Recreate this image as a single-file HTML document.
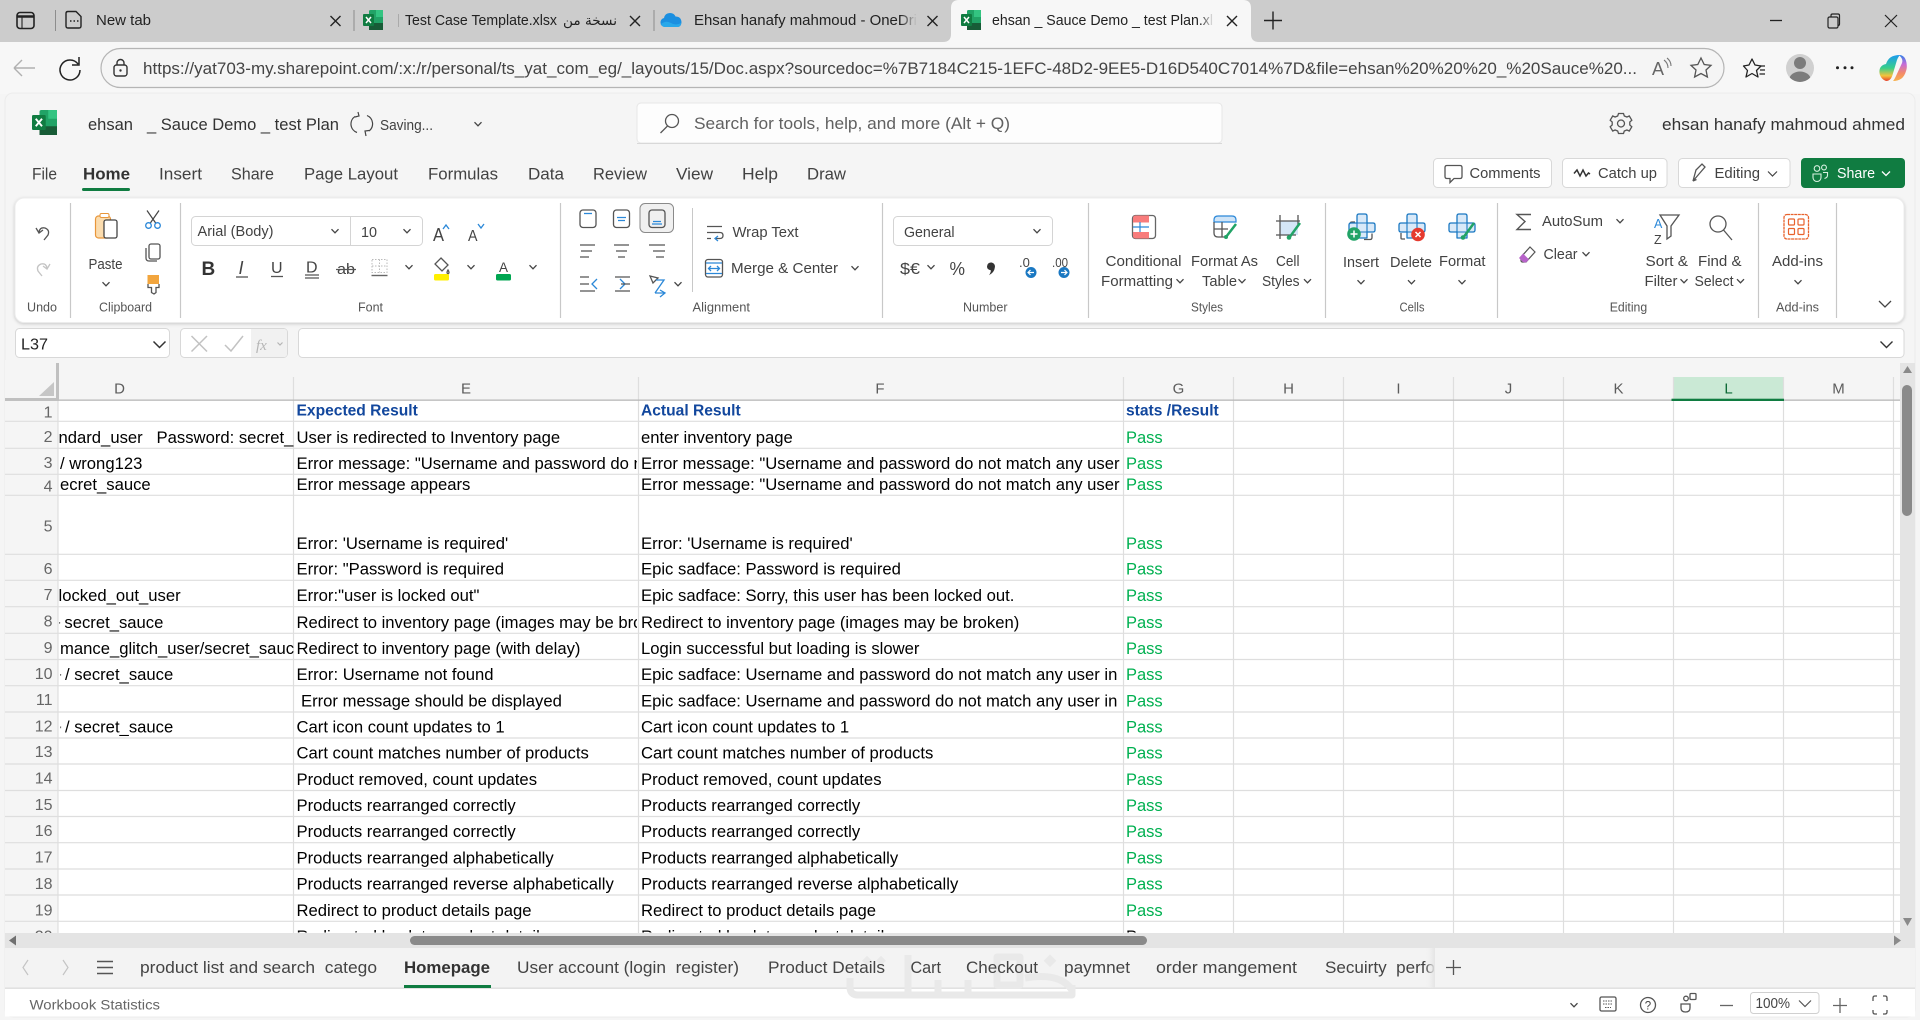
<!DOCTYPE html>
<html lang="en"><head><meta charset="utf-8"><title>ehsan _ Sauce Demo _ test Plan.xlsx</title>
<style>
html,body{margin:0;padding:0;width:1920px;height:1020px;overflow:hidden;background:#f5f5f5}
svg{display:block}
text{font-family:"Liberation Sans",sans-serif;fill:#424242;font-size:14.5px}
.t{font-size:14.5px;fill:#222}
.u{font-size:16.5px;fill:#444}
.r{font-size:14.5px;fill:#424242}
.g{font-size:13px;fill:#555}
.m{font-size:16.5px;fill:#424242}
.c{font-size:16.65px;fill:#000}
.h{font-size:15.6px;font-weight:bold;fill:#12479d}
.p{font-size:16.5px;fill:#00b050}
.ch{font-size:15px;fill:#5c5c5c;text-anchor:middle}
.rh{font-size:16px;fill:#666;text-anchor:end}
.s{font-size:16.5px;fill:#444}
.i{fill:none;stroke:#555;stroke-width:1.3}
.b{fill:none;stroke:#2b88d8;stroke-width:1.3}
</style></head><body>
<svg width="1920" height="1020" viewBox="0 0 1920 1020" xmlns="http://www.w3.org/2000/svg">
<defs>
<path id="v" d="M-3.5-1.8 0 1.8 3.5-1.8" fill="none" stroke="#444" stroke-width="1.3"/>
<path id="x" d="M-5-5 5 5M5-5-5 5" fill="none" stroke="#222" stroke-width="1.4"/>
<g id="xl"><rect x="6" y="0" width="14" height="20" rx="1.5" fill="#21a366"/><rect x="13" y="0" width="7" height="7" fill="#33c481"/><rect x="6" y="13" width="14" height="7" fill="#185c37"/><rect x="0" y="4" width="11" height="12" rx="1" fill="#107c41"/><path d="M3 7l5 6M8 7l-5 6" stroke="#fff" stroke-width="1.5"/></g>
<g id="plus"><path d="M0 9V2q0-2 2-2h6q2 0 2 2v7h6q2 0 2 2v5q0 2-2 2h-6v6H0v-6h-6q-2 0-2-2v-5q0-2 2-2Z" fill="#d9e9f8" stroke="#1a78c2" stroke-width="1.3" stroke-linejoin="round"/><path d="M0 9h10v9H0Z" fill="none" stroke="#1a78c2" stroke-width="1.1"/></g>
<clipPath id="cd"><rect x="58.5" y="400" width="235" height="533"/></clipPath>
<clipPath id="ce"><rect x="294" y="400" width="343" height="533"/></clipPath>
<clipPath id="cf"><rect x="639" y="400" width="483" height="533"/></clipPath>
<clipPath id="cg"><rect x="1124" y="400" width="109" height="533"/></clipPath>
<clipPath id="crow"><rect x="5" y="400" width="53" height="533"/></clipPath>
<clipPath id="ctab"><rect x="1300" y="948" width="134" height="40"/></clipPath>
<clipPath id="av"><circle cx="1800" cy="68" r="14"/></clipPath>
<linearGradient id="cp1" x1="0" y1="0" x2="0" y2="1"><stop offset="0" stop-color="#1d9bf0"/><stop offset=".5" stop-color="#38cf8a"/><stop offset=".8" stop-color="#f5c33b"/><stop offset="1" stop-color="#e5402c"/></linearGradient>
<linearGradient id="cp2" x1="0" y1="0" x2="0" y2="1"><stop offset="0" stop-color="#2f7fe8"/><stop offset=".35" stop-color="#c56cd8"/><stop offset=".7" stop-color="#f48a6a"/><stop offset="1" stop-color="#f7b24a"/></linearGradient>
<linearGradient id="fade" x1="0" x2="1"><stop offset="0" stop-color="#f3f3f3" stop-opacity="0"/><stop offset="1" stop-color="#e4e4e4"/></linearGradient>
<linearGradient id="f1" x1="0" x2="1"><stop offset="0" stop-color="#ccc" stop-opacity="0"/><stop offset="1" stop-color="#ccc"/></linearGradient>
<linearGradient id="f2" x1="0" x2="1"><stop offset="0" stop-color="#f7f7f7" stop-opacity="0"/><stop offset="1" stop-color="#f7f7f7"/></linearGradient>
</defs>

<!-- browser chrome -->
<rect width="1920" height="42" fill="#cccccc"/>
<rect y="42" width="1920" height="52" fill="#f7f7f7"/>
<path d="M943 42q8 0 8-8V8q0-8 8-8H1243q8 0 8 8V34q0 8 8 8Z" fill="#f7f7f7"/>
<rect x="17" y="12.5" width="17" height="16" rx="3" fill="none" stroke="#222" stroke-width="1.6"/><path d="M17 16.5h17" stroke="#222" stroke-width="2.6"/><path d="M22 17v11" stroke="#222" stroke-width="1.1"/>
<path d="M55.5 10V31M354 10V31M654 10V31" stroke="#8d8d8d" stroke-width="1"/>
<path d="M68 11.5h8l5 5V26q0 2-2 2H68q-2 0-2-2V13.5q0-2 2-2Z" fill="none" stroke="#222" stroke-width="1.4"/><path d="M70 21h1.5M73.5 21h1.5M77 21h1.5" stroke="#222" stroke-width="1.5"/>
<text class="t" x="96" y="25" textLength="55" lengthAdjust="spacingAndGlyphs">New tab</text>
<use href="#x" x="335.5" y="21"/>
<use href="#xl" x="363" y="10"/>
<rect x="398" y="14" width="1" height="13" fill="#aaa"/>
<text class="t" x="405" y="25" textLength="152" lengthAdjust="spacingAndGlyphs">Test Case Template.xlsx</text>
<text x="563" y="25" textLength="54" lengthAdjust="spacingAndGlyphs" style="font-family:'DejaVu Sans',sans-serif;fill:#222;font-size:13.5px" direction="rtl" text-anchor="start" dx="54">نسخة من</text>
<use href="#x" x="635" y="21"/>
<path d="M665 27q-4.5-.5-4.5-4.5 0-3.5 3.5-4.5 1-5 6-5 4 0 5.5 3.5 5.5 0 6 5.500 0 5-4.5 5Z" fill="#1b8fe0"/><path d="M661 24q5-4 10-1t10 0q0 4-4 4H665q-3 0-4-3Z" fill="#28a8ea"/>
<text class="t" x="694" y="25" textLength="223" lengthAdjust="spacingAndGlyphs">Ehsan hanafy mahmoud - OneDri</text>
<rect x="900" y="8" width="17" height="24" fill="url(#f1)"/>
<use href="#x" x="932.5" y="21"/>
<use href="#xl" x="961" y="10"/>
<text class="t" x="992" y="25" textLength="221" lengthAdjust="spacingAndGlyphs">ehsan _ Sauce Demo _ test Plan.xl</text>
<rect x="1200" y="8" width="14" height="24" fill="url(#f2)"/>
<use href="#x" x="1232" y="21"/>
<path d="M1264 20.5h18M1273 11.5v18" stroke="#222" stroke-width="1.4"/>
<path d="M1770 20.5h12" stroke="#222" stroke-width="1.3"/>
<rect x="1828" y="17" width="10" height="11" rx="1.5" fill="none" stroke="#222" stroke-width="1.2"/><path d="M1831 17v-1.5q0-1.5 1.5-1.5h5.5q1.5 0 1.5 1.5v8.5q0 1.5-1.5 1.5" fill="none" stroke="#222" stroke-width="1.2"/>
<path d="M1885 15 1897 27M1897 15 1885 27" stroke="#222" stroke-width="1.2"/>

<path d="M14 68H35M14 68l8-8M14 68l8 8" fill="none" stroke="#b0b0b0" stroke-width="1.4"/>
<path d="M78 64a10 10 0 1 0 2 6M79 57v8h-7" fill="none" stroke="#222" stroke-width="1.5"/>
<rect x="101" y="48.5" width="1623" height="39" rx="19.5" fill="#f5f5f5" stroke="#b5b5b5" stroke-width="1.2"/>
<rect x="114" y="65" width="13" height="11" rx="2.5" fill="none" stroke="#333" stroke-width="1.4"/><path d="M117 65v-2a3.5 3.5 0 0 1 7 0v2" fill="none" stroke="#333" stroke-width="1.4"/><circle cx="120.5" cy="70.5" r="1.2" fill="#333"/>
<text class="u" x="143" y="74" textLength="1494" lengthAdjust="spacingAndGlyphs">https://yat703-my.sharepoint.com/:x:/r/personal/ts_yat_com_eg/_layouts/15/Doc.aspx?sourcedoc=%7B7184C215-1EFC-48D2-9EE5-D16D540C7014%7D&amp;file=ehsan%20%20%20_%20Sauce%20...</text>
<text x="1652" y="75" style="font-size:18px;fill:#666" textLength="12" lengthAdjust="spacingAndGlyphs">A</text>
<path d="M1664 60q4 3 4 8M1667 58q4 3 4 8" fill="none" stroke="#777" stroke-width="1.1"/>
<polygon points="1701,58 1704.2,64.5 1711,65.3 1706,70 1707.4,77 1701,73.5 1694.6,77 1696,70 1691,65.3 1697.8,64.5" fill="none" stroke="#555" stroke-width="1.3"/>
<polygon points="1752,59 1755,65 1761,66 1756.5,70.5 1758,77 1752,73.5 1746,77 1747.5,70.5 1743.5,66 1749,65" fill="none" stroke="#222" stroke-width="1.3" stroke-linejoin="round"/>
<path d="M1760 66h5M1760 70h5M1759.5 74h5.5" stroke="#222" stroke-width="1.2"/>
<circle cx="1800" cy="68" r="14" fill="#d0d0d0"/><g clip-path="url(#av)"><circle cx="1800" cy="63" r="6" fill="#7c7c7c"/><ellipse cx="1800" cy="79" rx="10.5" ry="7.5" fill="#7c7c7c"/></g>
<circle cx="1837.5" cy="67.7" r="1.5" fill="#222"/><circle cx="1845" cy="67.7" r="1.5" fill="#222"/><circle cx="1852" cy="67.7" r="1.5" fill="#222"/>
<path d="M1900 55C1892 55 1888 58 1886 64 1880.5 65 1879 69 1879.5 73 1880 77 1883 80 1886 81 1890 81 1891.5 78 1892.5 75L1897 60C1898 57.5 1899 56 1900 55Z" fill="url(#cp1)"/>
<path d="M1893 81C1900 81 1904 78 1906 71 1907.5 68 1907 60 1904 57 1902 55 1900 55 1899 55 1902 58 1903 60 1902 63L1896 76C1895 78 1894 80 1893 81Z" fill="url(#cp2)"/>

<!-- app card -->
<rect x="5" y="93" width="1910" height="924" rx="8" fill="#f5f5f5" stroke="#ececec"/>
<use href="#xl" transform="translate(32 110) scale(1.25)"/>
<text x="88" y="130" class="m" style="fill:#333" textLength="45" lengthAdjust="spacingAndGlyphs">ehsan</text>
<text x="147" y="130" class="m" style="fill:#333" textLength="192" lengthAdjust="spacingAndGlyphs">_ Sauce Demo _ test Plan</text>
<path d="M367 115.5a9 9 0 0 1 2 15.5M357 132.5a9 9 0 0 1-2-16M358 112l1 4-4 1M366 136l-1-5 4-.5" fill="none" stroke="#444" stroke-width="1.2"/>
<text class="r" x="380" y="130" textLength="53" lengthAdjust="spacingAndGlyphs">Saving...</text>
<use href="#v" x="478" y="124"/>
<rect x="637" y="103" width="585" height="40" rx="4" fill="#fdfdfd" stroke="#e6e6e6"/><path d="M637 143.5h585" stroke="#d8d8d8"/>
<circle cx="672" cy="121" r="6.5" class="i"/><path d="M667.5 126 660.5 133" class="i"/>
<text x="694" y="129" style="font-size:16.5px;fill:#616161" textLength="316" lengthAdjust="spacingAndGlyphs">Search for tools, help, and more (Alt + Q)</text>
<circle cx="1621" cy="123.5" r="3.5" class="i"/><path d="M1618.5 113.5h5l.8 2.5 2.6 1 2.4-1 2.5 4.2-2 1.8v3l2 1.8-2.5 4.2-2.4-1-2.6 1-.8 2.5h-5l-.8-2.5-2.6-1-2.4 1-2.5-4.2 2-1.8v-3l-2-1.8 2.5-4.2 2.4 1 2.6-1Z" class="i"/>
<text x="1662" y="130" class="m" style="fill:#333" textLength="243" lengthAdjust="spacingAndGlyphs">ehsan hanafy mahmoud ahmed</text>

<text class="m" x="32" y="179.5" textLength="25" lengthAdjust="spacingAndGlyphs">File</text>
<text class="m" x="83" y="179.5" textLength="47" lengthAdjust="spacingAndGlyphs" style="font-weight:bold;fill:#333">Home</text>
<rect x="82" y="188" width="48" height="3" rx="1.5" fill="#107c41"/>
<text class="m" x="159" y="179.5" textLength="43" lengthAdjust="spacingAndGlyphs">Insert</text>
<text class="m" x="231" y="179.5" textLength="43" lengthAdjust="spacingAndGlyphs">Share</text>
<text class="m" x="304" y="179.5" textLength="94" lengthAdjust="spacingAndGlyphs">Page Layout</text>
<text class="m" x="428" y="179.5" textLength="70" lengthAdjust="spacingAndGlyphs">Formulas</text>
<text class="m" x="528" y="179.5" textLength="36" lengthAdjust="spacingAndGlyphs">Data</text>
<text class="m" x="593" y="179.5" textLength="54" lengthAdjust="spacingAndGlyphs">Review</text>
<text class="m" x="676" y="179.5" textLength="37" lengthAdjust="spacingAndGlyphs">View</text>
<text class="m" x="742" y="179.5" textLength="36" lengthAdjust="spacingAndGlyphs">Help</text>
<text class="m" x="807" y="179.5" textLength="39" lengthAdjust="spacingAndGlyphs">Draw</text>

<g fill="#fff" stroke="#d8d8d8"><rect x="1433.5" y="158.5" width="118" height="29" rx="4"/><rect x="1562.5" y="158.5" width="104.5" height="29" rx="4"/><rect x="1678.5" y="158.5" width="111.5" height="29" rx="4"/></g>
<rect x="1801" y="158" width="104" height="30" rx="4" fill="#107c41"/>
<path d="M1447 165.5h13q2 0 2 2v9q0 2-2 2h-6l-4 4v-4h-3q-2 0-2-2v-9q0-2 2-2Z" class="i"/>
<text class="r" x="1469.5" y="178" textLength="71" lengthAdjust="spacingAndGlyphs">Comments</text>
<path d="M1574 173.5l3-3.5 3 6 3-6 3 6 2.5-3 1.5 1" fill="none" stroke="#333" stroke-width="1.5"/>
<text class="r" x="1598" y="178" textLength="59" lengthAdjust="spacingAndGlyphs">Catch up</text>
<path d="M1693 181l3-11 6-6 3 3-6 7Z M1693 181l3.5-1.5" class="i"/>
<text class="r" x="1714.5" y="178" textLength="45.5" lengthAdjust="spacingAndGlyphs">Editing</text>
<path d="M1768 171.5l4.5 4.5 4.500-4.5" fill="none" stroke="#444" stroke-width="1.2"/>
<circle cx="1824" cy="167.5" r="2.4" fill="none" stroke="#d7f0e0" stroke-width="1.1"/><circle cx="1817" cy="168.5" r="2.8" fill="none" stroke="#d7f0e0" stroke-width="1.1"/><path d="M1813 174h8v3.500a4 4 0 0 1-8 0ZM1823 172.500h4.500v3q0 2-3 3" fill="none" stroke="#d7f0e0" stroke-width="1.1"/>
<text x="1837" y="178" style="font-size:14.5px;fill:#fff" textLength="38" lengthAdjust="spacingAndGlyphs">Share</text>
<path d="M1882 171.5l4 4 4-4" fill="none" stroke="#fff" stroke-width="1.3"/>

<!-- ribbon -->
<rect x="15" y="198" width="1889" height="124.5" rx="9" fill="#fff" stroke="#ececec" style="filter:drop-shadow(0 1px 1.5px rgba(0,0,0,.18))"/>
<path d="M70.5 203V318M180.5 203V318M560.5 203V318M882.5 203V318M1088.5 203V318M1325.5 203V318M1497.5 203V318M1758.5 203V318M1836.5 203V318" stroke="#c8c8c8" stroke-width="1.2"/>
<!-- undo -->
<path d="M36 228l3 5 4-3M39 232q1-5 6-4 5 2 3 7l-4 5" class="i"/>
<path d="M50 264l-3 5-4-3M47 268q-1-5-6-4-5 2-3 7l4 5" fill="none" stroke="#c4c4c4" stroke-width="1.3"/>
<text class="g" x="27" y="311.5" textLength="30" lengthAdjust="spacingAndGlyphs">Undo</text>
<!-- clipboard -->
<rect x="95.5" y="216" width="15" height="22" rx="3" fill="#fbdcae" stroke="#e8963a" stroke-width="1.2"/><rect x="100" y="213.5" width="9" height="4" rx="1.5" fill="#fff" stroke="#e8963a"/>
<rect x="104" y="220" width="13" height="18" rx="2" fill="#fff" stroke="#444" stroke-width="1.3"/>
<text class="r" x="88.5" y="269" textLength="34" lengthAdjust="spacingAndGlyphs">Paste</text>
<use href="#v" x="106" y="284"/>
<path d="M147 210.5l9 13M159 210.5l-9 13" stroke="#444" stroke-width="1.2"/><circle cx="148.500" cy="225.500" r="2.800" class="b"/><circle cx="157.500" cy="225.500" r="2.800" class="b"/>
<rect x="149" y="244" width="11" height="15" rx="2" class="i"/><path d="M146 248v10q0 3 3 3h8" class="i"/>
<rect x="147.5" y="275" width="11.5" height="9" fill="#f2a53d"/><path d="M148 284v3.5h3.5v5l2.5 1.5 2-1.5v-5h3V284" class="i"/>
<text class="g" x="99" y="311.5" textLength="53" lengthAdjust="spacingAndGlyphs">Clipboard</text>
<!-- font -->
<rect x="191.5" y="216.5" width="231" height="29" rx="4" fill="#fff" stroke="#d4d4d4"/><path d="M350.5 216.5v29" stroke="#d4d4d4"/>
<text class="r" x="197.5" y="236" textLength="76" lengthAdjust="spacingAndGlyphs">Arial (Body)</text><use href="#v" x="335" y="231"/>
<text class="r" x="361" y="237" textLength="16" lengthAdjust="spacingAndGlyphs">10</text><use href="#v" x="407" y="231"/>
<text x="433" y="241" style="font-size:18px;fill:#444" textLength="11" lengthAdjust="spacingAndGlyphs">A</text><path d="M443 229l3-4 3 4" class="b"/>
<text x="468" y="241" style="font-size:15.5px;fill:#444" textLength="9.5" lengthAdjust="spacingAndGlyphs">A</text><path d="M478 224l3 4 3-4" class="b"/>
<text x="201.5" y="275" style="font-size:19px;font-weight:bold;fill:#333">B</text>
<text x="238.5" y="274" style="font-size:18px;font-style:italic;fill:#444">I</text><path d="M236 277h12" class="i"/>
<text x="271" y="273" style="font-size:16px;fill:#444">U</text><path d="M271 276.5h12" class="i"/>
<text x="306" y="272.5" style="font-size:16px;fill:#444">D</text><path d="M305 275h14M305 278h14" class="i"/>
<text x="337" y="274" style="font-size:15px;fill:#444" textLength="18" lengthAdjust="spacingAndGlyphs">ab</text><path d="M336 269.5h20" class="i"/>
<rect x="372" y="259.5" width="15" height="13" fill="none" stroke="#bbb" stroke-dasharray="1.5 1.5"/><path d="M379.5 259.5v13M372 266h15" stroke="#bbb" stroke-dasharray="1.5 1.5" fill="none"/><path d="M371.5 275.5h16" stroke="#666" stroke-width="1.4"/>
<use href="#v" x="409" y="267"/>
<path d="M441 258l7 7-6 6-7-7Z" class="i"/><path d="M448 270q2 3 0 4-2-1 0-4Z" class="i"/><rect x="434" y="274" width="15" height="6.5" rx="1.5" fill="#ffef00"/>
<use href="#v" x="471" y="267"/>
<text x="499" y="272" style="font-size:13.5px;fill:#444">A</text><rect x="496" y="274" width="15" height="6.5" rx="1.5" fill="#00a651"/>
<use href="#v" x="533" y="267"/>
<text class="g" x="358" y="311.5" textLength="25" lengthAdjust="spacingAndGlyphs">Font</text>
<!-- alignment -->
<rect x="640" y="203.5" width="33.5" height="29" rx="5" fill="#f0f0f0" stroke="#8a8a8a" stroke-width="1"/>
<rect x="580" y="210" width="16" height="17.5" rx="3" class="i"/><path d="M584 213.5h8" class="b"/>
<rect x="613.5" y="210" width="16" height="17.5" rx="3" class="i"/><path d="M617 217.5h9M618 220.5h7" class="b"/>
<rect x="649" y="210" width="16" height="17.5" rx="3" class="i"/><path d="M653 221.5h8M652 224h10" class="b"/>
<path d="M580 245h15M581 251h11M580 257h9" class="i"/><path d="M614 245h15M616 251h11M618 257h7" class="i"/><path d="M649 245h16M653 251h12M656 257h8" class="i"/>
<path d="M580 277h9M580 284h9M580 291h15" class="i"/><path d="M597 279l-5 5 5 5" class="b"/>
<path d="M620 279l5 5-5 5" class="b"/><path d="M615 277h15M621 284h9M615 291h15" class="i"/>
<path d="M650 276l8 2-5 5Z" class="i"/><path d="M655 293l9-13h-8M655 293h10M660 297l5-4-5-3" class="b"/>
<use href="#v" x="678" y="284"/>
<path d="M692.5 208V292" stroke="#c8c8c8"/>
<path d="M707 226.5h15M707 232.5h13q3 0 3 3t-3 3h-5M707 238.5h4" class="i"/><path d="M718 236l-3 2.5 3 2.5" class="b"/>
<text class="r" x="732.5" y="237" textLength="66" lengthAdjust="spacingAndGlyphs">Wrap Text</text>
<rect x="705.5" y="259.5" width="17" height="17.5" rx="2.5" class="i"/><path d="M706 263h16M706 273.5h16" class="b"/><path d="M709 268.5h10M711 266l-2.5 2.5 2.5 2.5M717 266l2.5 2.5-2.5 2.5" class="b"/>
<text class="r" x="731" y="273" textLength="107" lengthAdjust="spacingAndGlyphs">Merge &amp; Center</text>
<use href="#v" x="855" y="268"/>
<text class="g" x="692.5" y="311.5" textLength="57.5" lengthAdjust="spacingAndGlyphs">Alignment</text>
<!-- number -->
<rect x="893.5" y="216.5" width="159" height="29" rx="4" fill="#fff" stroke="#d4d4d4"/>
<text class="r" x="904" y="237" textLength="50.5" lengthAdjust="spacingAndGlyphs">General</text><use href="#v" x="1037" y="231"/>
<text x="900" y="274" style="font-size:16px;fill:#444" textLength="20" lengthAdjust="spacingAndGlyphs">$€</text><use href="#v" x="931" y="267"/>
<text x="949.5" y="275" style="font-size:18px;fill:#444" textLength="15.5" lengthAdjust="spacingAndGlyphs">%</text>
<path d="M987 266.5a4 4 0 1 1 7.8 1.200q-.5 4.500-5.800 7.500q2-3 1.800-5q-3.800-.5-3.800-3.700Z" fill="#333"/>
<text x="1019" y="267" style="font-size:13px;fill:#444">.0</text><circle cx="1031" cy="272.5" r="5.5" fill="#1a78c2"/><path d="M1034 272.5h-6M1030.500 270l-2.500 2.500 2.500 2.500" stroke="#fff" fill="none" stroke-width="1.200"/>
<text x="1052" y="267" style="font-size:13px;fill:#444" textLength="16" lengthAdjust="spacingAndGlyphs">.00</text><circle cx="1064" cy="272.5" r="5.5" fill="#1a78c2"/><path d="M1061 272.5h6M1064.500 270l2.500 2.500-2.500 2.500" stroke="#fff" fill="none" stroke-width="1.200"/>
<text class="g" x="963" y="311.5" textLength="44.5" lengthAdjust="spacingAndGlyphs">Number</text>
<!-- styles -->
<rect x="1132.5" y="215.5" width="23" height="23" rx="3" fill="#fff" stroke="#666" stroke-width="1.3"/>
<path d="M1133 218q0-2.5 3-2.5h13v7h-16ZM1133 232h16v6.5h-13q-3 0-3-2.5Z" fill="#f87c7c"/><path d="M1133 227h16M1140 222v10" stroke="#2b88d8" stroke-width="1.2"/>
<text class="r" x="1105.5" y="266" textLength="76" lengthAdjust="spacingAndGlyphs">Conditional</text>
<text class="r" x="1101" y="286" textLength="72" lengthAdjust="spacingAndGlyphs">Formatting</text><use href="#v" x="1180" y="281"/>
<path d="M1214 222h22v-2q0-4-4-4h-14q-4 0-4 4Z" fill="#cfe4f7" stroke="#2b88d8" stroke-width="1.2"/><path d="M1214 222v11q0 4 4 4h7M1214 229h14M1222 222v15" class="i"/><path d="M1226 237l10-13" stroke="#21a366" stroke-width="2.5"/><circle cx="1226" cy="237" r="2" fill="#21a366"/>
<text class="r" x="1191" y="266" textLength="67" lengthAdjust="spacingAndGlyphs">Format As</text>
<text class="r" x="1202" y="286" textLength="35" lengthAdjust="spacingAndGlyphs">Table</text><use href="#v" x="1242" y="281"/>
<rect x="1280" y="221" width="18" height="14" fill="#d4e6f7"/><path d="M1276 221h24M1276 235h20M1280 215v24M1298 215v10" class="i"/><path d="M1289 238l11-15" stroke="#21a366" stroke-width="2.5"/><circle cx="1289" cy="237.5" r="2.3" fill="#21a366"/>
<text class="r" x="1276" y="266" textLength="23.5" lengthAdjust="spacingAndGlyphs">Cell</text>
<text class="r" x="1262" y="286" textLength="37.5" lengthAdjust="spacingAndGlyphs">Styles</text><use href="#v" x="1307.5" y="281"/>
<text class="g" x="1191" y="311.5" textLength="32" lengthAdjust="spacingAndGlyphs">Styles</text>
<!-- cells -->
<path d="M1350 227v-3q0-2 2-2h3M1349 238h3M1364 239.500h6q2 0 2-2v-4" class="i"/>
<use href="#plus" x="1357" y="214"/>
<circle cx="1354" cy="234" r="6.8" fill="#21a366"/><path d="M1354 230.5v7M1350.5 234h7" stroke="#fff" stroke-width="1.5"/>
<use href="#plus" x="1407" y="214"/>
<path d="M1401 233v5q0 1 1 1h3" class="i"/>
<circle cx="1418" cy="234.5" r="6.8" fill="#e53a2f"/><path d="M1415.5 232l5 5M1420.5 232l-5 5" stroke="#fff" stroke-width="1.5"/>
<use href="#plus" x="1457" y="214"/>
<path d="M1463 238l11-15" stroke="#21a366" stroke-width="2.5"/><circle cx="1463" cy="237.5" r="2.3" fill="#21a366"/>
<text class="r" x="1343" y="267" textLength="36" lengthAdjust="spacingAndGlyphs">Insert</text>
<text class="r" x="1390" y="267" textLength="42" lengthAdjust="spacingAndGlyphs">Delete</text>
<text class="r" x="1439" y="266" textLength="46.5" lengthAdjust="spacingAndGlyphs">Format</text>
<use href="#v" x="1361" y="282"/><use href="#v" x="1411.5" y="282"/><use href="#v" x="1462" y="282"/>
<text class="g" x="1399.5" y="311.5" textLength="25" lengthAdjust="spacingAndGlyphs">Cells</text>
<!-- editing -->
<path d="M1531 214.5h-14l8 7-8 8h14" fill="none" stroke="#555" stroke-width="1.4"/>
<text class="r" x="1542" y="226" textLength="61" lengthAdjust="spacingAndGlyphs">AutoSum</text><use href="#v" x="1620" y="221"/>
<path d="M1521 257l9-10 5 5-9 10h-4l-1-1Z" fill="none" stroke="#555" stroke-width="1.2"/><path d="M1519 258l4 4q1 .5 3 .5l3-3-6-6Z" fill="#b763c9"/>
<text class="r" x="1543.5" y="259" textLength="34" lengthAdjust="spacingAndGlyphs">Clear</text><use href="#v" x="1586" y="254"/>
<text x="1654" y="228" style="font-size:12.5px;fill:#2b88d8">A</text><text x="1654" y="244" style="font-size:12.5px;fill:#444">Z</text>
<path d="M1660 215h19l-8 11v10l-4 3v-13Z" class="i"/>
<circle cx="1718" cy="224" r="8" class="i"/><path d="M1723.5 230 1732 240" class="i"/>
<text class="r" x="1645.5" y="266" textLength="42.5" lengthAdjust="spacingAndGlyphs">Sort &amp;</text>
<text class="r" x="1644.5" y="286" textLength="33" lengthAdjust="spacingAndGlyphs">Filter</text><use href="#v" x="1684" y="281"/>
<text class="r" x="1698" y="266" textLength="43.5" lengthAdjust="spacingAndGlyphs">Find &amp;</text>
<text class="r" x="1694.5" y="286" textLength="39" lengthAdjust="spacingAndGlyphs">Select</text><use href="#v" x="1740.5" y="281"/>
<text class="g" x="1609.7" y="311.5" textLength="37.5" lengthAdjust="spacingAndGlyphs">Editing</text>
<!-- add-ins -->
<rect x="1784" y="214.5" width="24.5" height="24.5" rx="3" fill="none" stroke="#e8622c" stroke-width="1.3" stroke-dasharray="3 .6"/>
<g fill="none" stroke="#e8622c" stroke-width="1.2"><rect x="1788.5" y="219" width="6" height="6" rx="1"/><rect x="1798" y="219" width="6" height="6" rx="1"/><rect x="1788.5" y="228.5" width="6" height="6" rx="1"/><rect x="1798" y="228.5" width="6" height="6" rx="1"/></g>
<text class="r" x="1772" y="266" textLength="51" lengthAdjust="spacingAndGlyphs">Add-ins</text><use href="#v" x="1798" y="282"/>
<text class="g" x="1776" y="311.5" textLength="43" lengthAdjust="spacingAndGlyphs">Add-ins</text>
<path d="M1879 301l6 6 6-6" fill="none" stroke="#444" stroke-width="1.3"/>

<!-- formula bar -->
<rect x="15.5" y="328.5" width="154" height="29" rx="4" fill="#fff" stroke="#d8d8d8"/>
<text x="21" y="349.5" style="font-size:16px;fill:#222" textLength="27" lengthAdjust="spacingAndGlyphs">L37</text>
<path d="M153.5 341.5l6 6 6-6" fill="none" stroke="#333" stroke-width="1.5"/>
<rect x="180.5" y="328.5" width="107" height="29" rx="4" fill="#fff" stroke="#d8d8d8"/>
<path d="M251 329h33q3 0 3 3v22q0 3-3 3h-33Z" fill="#f1f1f1"/>
<path d="M191.5 336 207 351.5M207 336 191.5 351.5M225 345l6 6 12-15" fill="none" stroke="#c2c2c2" stroke-width="1.5"/>
<text x="256" y="350" style="font-size:15px;font-style:italic;fill:#b5b5b5;font-family:'Liberation Serif',serif">fx</text>
<path d="M277.5 342.5l2.5 2.5 2.5-2.5" fill="none" stroke="#b5b5b5" stroke-width="1.2"/>
<rect x="298.5" y="328.5" width="1605.5" height="29" rx="4" fill="#fff" stroke="#d8d8d8"/>
<path d="M1880.5 341.5l6 6 6-6" fill="none" stroke="#333" stroke-width="1.4"/>

<!-- grid -->
<rect x="5" y="360" width="1895" height="40" fill="#f5f5f5"/>
<rect x="58" y="400" width="1842" height="533" fill="#fff"/>
<rect x="5" y="400" width="53" height="533" fill="#f5f5f5"/>
<rect x="1673.5" y="377" width="110" height="23" fill="#cae9d5"/>
<path d="M293.5 377V933M638.5 377V933M1123.5 377V933M1233.5 377V933M1343.5 377V933M1453.5 377V933M1563.5 377V933M1673.5 377V933M1783.5 377V933M1893.5 377V933" stroke="#dedede" stroke-width="1.2"/>
<path d="M5 421.3H1900M5 448.3H1900M5 474.3H1900M5 495.3H1900M5 554.3H1900M5 580.3H1900M5 606.7H1900M5 633.3H1900M5 659.5H1900M5 685.7H1900M5 712H1900M5 738H1900M5 764H1900M5 790.5H1900M5 816.5H1900M5 842.7H1900M5 869H1900M5 895H1900M5 921.3H1900" stroke="#dedede" stroke-width="1.2"/>
<path d="M58 400V933" stroke="#dedede" stroke-width="1.2"/>
<rect x="5" y="399.5" width="1895" height="1.3" fill="#b8b8b8"/>
<rect x="56" y="363" width="3" height="37" fill="#c0c0c0"/><rect x="5" y="398" width="54" height="3" fill="#c0c0c0"/>
<path d="M54 382v14H39Z" fill="#c6c6c6"/>
<rect x="1671.5" y="398.7" width="112.5" height="2.3" fill="#107c41"/>
<text class="ch" x="119.5" y="393.5">D</text><text class="ch" x="466" y="393.5">E</text><text class="ch" x="880" y="393.5">F</text><text class="ch" x="1178.5" y="393.5">G</text><text class="ch" x="1288.5" y="393.5">H</text><text class="ch" x="1398.5" y="393.5">I</text><text class="ch" x="1508.5" y="393.5">J</text><text class="ch" x="1618.5" y="393.5">K</text><text class="ch" x="1728.5" y="393.5" style="fill:#0e6b38">L</text><text class="ch" x="1838.5" y="393.5">M</text>

<g clip-path="url(#crow)">
<text class="rh" x="52.5" y="417.5">1</text><text class="rh" x="52.5" y="442">2</text><text class="rh" x="52.5" y="468">3</text><text class="rh" x="52.5" y="491.5">4</text><text class="rh" x="52.5" y="531.5">5</text><text class="rh" x="52.5" y="574">6</text><text class="rh" x="52.5" y="600">7</text><text class="rh" x="52.5" y="626.5">8</text><text class="rh" x="52.5" y="653">9</text><text class="rh" x="52.5" y="679">10</text><text class="rh" x="52.5" y="705">11</text><text class="rh" x="52.5" y="731.5">12</text><text class="rh" x="52.5" y="757">13</text><text class="rh" x="52.5" y="783.5">14</text><text class="rh" x="52.5" y="810">15</text><text class="rh" x="52.5" y="836">16</text><text class="rh" x="52.5" y="862.5">17</text><text class="rh" x="52.5" y="889">18</text><text class="rh" x="52.5" y="915.5">19</text><text class="rh" x="52.5" y="941.5">20</text>
</g>

<g clip-path="url(#cd)" transform="translate(0 -.5)">
<text class="c" x="58.5" y="443.3" xml:space="preserve">ndard_user   Password: secret_sauce</text>
<text class="c" x="60" y="469.3">/ wrong123</text>
<text class="c" x="60" y="490.3">ecret_sauce</text>
<text class="c" x="58.5" y="601.3">locked_out_user</text>
<text class="c" x="59" y="628.3" style="font-size:8px">'</text>
<text class="c" x="64.4" y="628.3">secret_sauce</text>
<text class="c" x="60" y="654.3">mance_glitch_user/secret_sauce</text>
<text class="c" x="60" y="680.5" style="font-size:8px">'</text>
<text class="c" x="65" y="680.5">/ secret_sauce</text>
<text class="c" x="60" y="733" style="font-size:8px">'</text>
<text class="c" x="65" y="733">/ secret_sauce</text>
</g>
<g clip-path="url(#ce)" transform="translate(0 -.5)">
<text class="h" x="296.5" y="416">Expected Result</text>
<text class="c" x="296.5" y="443.3">User is redirected to Inventory page</text>
<text class="c" x="296.5" y="469.3">Error message: "Username and password do not match any user</text>
<text class="c" x="296.5" y="490.3">Error message appears</text>
<text class="c" x="296.5" y="549.3">Error: 'Username is required'</text>
<text class="c" x="296.5" y="575">Error: "Password is required</text>
<text class="c" x="296.5" y="601.3">Error:"user is locked out"</text>
<text class="c" x="296.5" y="628.3">Redirect to inventory page (images may be broken)</text>
<text class="c" x="296.5" y="654.3">Redirect to inventory page (with delay)</text>
<text class="c" x="296.5" y="680.5">Error: Username not found</text>
<text class="c" x="301" y="707">Error message should be displayed</text>
<text class="c" x="296.5" y="733">Cart icon count updates to 1</text>
<text class="c" x="296.5" y="759">Cart count matches number of products</text>
<text class="c" x="296.5" y="785.5">Product removed, count updates</text>
<text class="c" x="296.5" y="811.5">Products rearranged correctly</text>
<text class="c" x="296.5" y="837.7">Products rearranged correctly</text>
<text class="c" x="296.5" y="864">Products rearranged alphabetically</text>
<text class="c" x="296.5" y="890">Products rearranged reverse alphabetically</text>
<text class="c" x="296.5" y="916.3">Redirect to product details page</text>
<text class="c" x="296.5" y="942.5">Redirected back to product details</text>
</g>
<g clip-path="url(#cf)" transform="translate(0 -.5)">
<text class="h" x="641" y="416">Actual Result</text>
<text class="c" x="641" y="443.3">enter inventory page</text>
<text class="c" x="641" y="469.3">Error message: "Username and password do not match any user</text>
<text class="c" x="641" y="490.3">Error message: "Username and password do not match any user</text>
<text class="c" x="641" y="549.3">Error: 'Username is required'</text>
<text class="c" x="641" y="575">Epic sadface: Password is required</text>
<text class="c" x="641" y="601.3">Epic sadface: Sorry, this user has been locked out.</text>
<text class="c" x="641" y="628.3">Redirect to inventory page (images may be broken)</text>
<text class="c" x="641" y="654.3">Login successful but loading is slower</text>
<text class="c" x="641" y="680.5">Epic sadface: Username and password do not match any user in</text>
<text class="c" x="641" y="707">Epic sadface: Username and password do not match any user in</text>
<text class="c" x="641" y="733">Cart icon count updates to 1</text>
<text class="c" x="641" y="759">Cart count matches number of products</text>
<text class="c" x="641" y="785.5">Product removed, count updates</text>
<text class="c" x="641" y="811.5">Products rearranged correctly</text>
<text class="c" x="641" y="837.7">Products rearranged correctly</text>
<text class="c" x="641" y="864">Products rearranged alphabetically</text>
<text class="c" x="641" y="890">Products rearranged reverse alphabetically</text>
<text class="c" x="641" y="916.3">Redirect to product details page</text>
<text class="c" x="641" y="942.5">Redirected back to product details</text>
</g>
<g clip-path="url(#cg)" transform="translate(0 -.5)">
<text class="h" x="1126" y="416">stats /Result</text>
<text class="p" x="1126" y="443.3">Pass</text><text class="p" x="1126" y="469.3">Pass</text><text class="p" x="1126" y="490.3">Pass</text><text class="p" x="1126" y="549.3">Pass</text><text class="p" x="1126" y="575">Pass</text><text class="p" x="1126" y="601.3">Pass</text><text class="p" x="1126" y="628.3">Pass</text><text class="p" x="1126" y="654.3">Pass</text><text class="p" x="1126" y="680.5">Pass</text><text class="p" x="1126" y="707">Pass</text><text class="p" x="1126" y="733">Pass</text><text class="p" x="1126" y="759">Pass</text><text class="p" x="1126" y="785.5">Pass</text><text class="p" x="1126" y="811.5">Pass</text><text class="p" x="1126" y="837.7">Pass</text><text class="p" x="1126" y="864">Pass</text><text class="p" x="1126" y="890">Pass</text><text class="p" x="1126" y="916.3">Pass</text><text class="c" x="1126" y="942.5">Pass</text>
</g>

<!-- scrollbars -->
<rect x="1900" y="363" width="15" height="570" fill="#e4e4e4"/>
<path d="M1907.5 366l4.5 7h-9Z" fill="#8a8a8a"/>
<rect x="1902" y="385" width="10" height="131" rx="5" fill="#8a8a8a"/>
<path d="M1903 918h9l-4.5 8Z" fill="#8a8a8a"/>
<rect x="5" y="933" width="1910" height="15" fill="#e4e4e4"/>
<path d="M9 940.5l7-5v10Z" fill="#707070"/>
<rect x="410" y="936" width="737" height="9" rx="4.5" fill="#8a8a8a"/>
<path d="M1894 935.5l7 5-7 5Z" fill="#8a8a8a"/>

<!-- sheet tabs -->
<rect x="5" y="948" width="1910" height="40" fill="#f3f3f3"/>
<rect x="5" y="989" width="1910" height="27.5" fill="#fff"/>
<rect x="5" y="987.5" width="1910" height="1.3" fill="#dcdcdc"/>
<g fill="none" stroke="#e9e9e9" stroke-width="7" stroke-linejoin="round">
<path d="M850 978V987Q850 995 858 995H1072V985"/>
<path d="M908 955V995M938 980V995M968 980V995"/>
<path d="M997 957H1020V985H997Z"/>
<path d="M1025 978Q1060 972 1072 990"/>
</g>
<g fill="#e9e9e9"><rect x="864" y="957" width="7" height="7" transform="rotate(45 867 960)"/><rect x="878" y="957" width="7" height="7" transform="rotate(45 881 960)"/><rect x="1046" y="956" width="9" height="9" transform="rotate(45 1050 960)"/></g>
<path d="M28 960l-5 7.5 5 7.5" fill="none" stroke="#c4c4c4" stroke-width="1.2"/><path d="M63 960l5 7.5-5 7.5" fill="none" stroke="#c4c4c4" stroke-width="1.2"/>
<path d="M97 961.5h16M97 967.5h16M97 973.5h16" stroke="#555" stroke-width="1.4"/>
<text class="s" x="140" y="973" textLength="237" lengthAdjust="spacingAndGlyphs" xml:space="preserve">product list and search  catego</text>
<text class="s" x="404" y="973" textLength="86" lengthAdjust="spacingAndGlyphs" style="font-weight:bold;fill:#333">Homepage</text>
<rect x="404" y="985" width="87" height="3" fill="#107c41"/>
<text class="s" x="517" y="973" textLength="222" lengthAdjust="spacingAndGlyphs" xml:space="preserve">User account (login  register)</text>
<text class="s" x="768" y="973" textLength="117" lengthAdjust="spacingAndGlyphs">Product Details</text>
<text class="s" x="910.5" y="973" textLength="30.5" lengthAdjust="spacingAndGlyphs">Cart</text>
<text class="s" x="966" y="973" textLength="72" lengthAdjust="spacingAndGlyphs">Checkout</text>
<text class="s" x="1064" y="973" textLength="66" lengthAdjust="spacingAndGlyphs">paymnet</text>
<text class="s" x="1156" y="973" textLength="141" lengthAdjust="spacingAndGlyphs">order mangement</text>
<g clip-path="url(#ctab)"><text class="s" x="1325" y="973" textLength="110" lengthAdjust="spacingAndGlyphs" xml:space="preserve">Secuirty  perfo</text></g>
<rect x="1425" y="948" width="10" height="40" fill="url(#fade)"/>
<path d="M1446 967.5h15M1453.5 960v15" stroke="#555" stroke-width="1.3"/>

<!-- status -->
<text x="29.5" y="1009.5" style="font-size:13.5px;fill:#666" textLength="130.5" lengthAdjust="spacingAndGlyphs">Workbook Statistics</text>
<use href="#v" x="1574" y="1005"/>
<rect x="1600" y="997" width="16" height="14" rx="1.5" class="i"/><path d="M1603 1001h10M1603 1004h10M1605 1007.5h6" stroke="#555" stroke-dasharray="1.5 1" fill="none"/>
<circle cx="1648" cy="1005" r="7.5" class="i"/><text x="1644.8" y="1009.5" style="font-size:11.5px;fill:#444">?</text>
<circle cx="1686" cy="998.5" r="2.3" class="i"/><rect x="1690" y="993.5" width="6" height="6" rx="1" class="i"/><path d="M1681 1004h9v4q0 4-4.5 4t-4.5-4Z" class="i"/>
<path d="M1720 1005.5h13" stroke="#666" stroke-width="1.3"/>
<rect x="1750.5" y="992.5" width="68.5" height="21" rx="3" fill="#fff" stroke="#d0d0d0"/>
<text x="1755.5" y="1008" style="font-size:14.5px;fill:#444" textLength="34.5" lengthAdjust="spacingAndGlyphs">100%</text>
<path d="M1799 1000.5l6 6 6-6" fill="none" stroke="#555" stroke-width="1.2"/>
<path d="M1833 1005.5h14M1840 998v15" stroke="#666" stroke-width="1.3"/>
<path d="M1873 1001v-3q0-2 2-2h2M1883 996h2q2 0 2 2v3M1887 1010v2q0 2-2 2h-2M1877 1014h-2q-2 0-2-2v-2" class="i"/>
</svg>
</body></html>
